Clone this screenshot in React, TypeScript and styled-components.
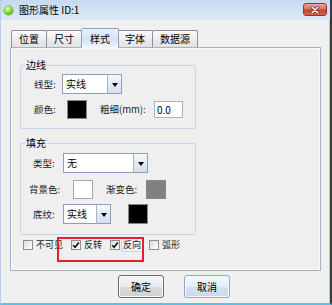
import React from "react";
import styled, { createGlobalStyle } from "styled-components";

const Global = createGlobalStyle`
  html, body { margin: 0; padding: 0; }
  body {
    width: 332px; height: 305px; overflow: hidden; background: #f0f0f0;
    font-family: "Noto Sans CJK SC", "Noto Sans", sans-serif;
    color: #000;
  }
`;

const Window = styled.div`
  position: relative;
  width: 332px;
  height: 305px;
  box-sizing: border-box;
  background: #f0f0f0;
  border-left: 1px solid #b4cde8;
  border-right: 2px solid #3a3a3a;
  border-bottom: 2px solid #57c3ea;
  box-shadow: inset -1px 0 0 #a9c6e6;
  display: flex;
  flex-direction: column;
`;

const TitleBar = styled.div`
  height: 20px;
  flex: none;
  display: flex;
  align-items: flex-start;
  background: linear-gradient(#c6d9ef, #dce8f5);
  border-bottom: 1px solid #d6e2f0;
  box-sizing: border-box;
`;

const AppIcon = styled.div`
  width: 9px;
  height: 9px;
  margin: 6px 0 0 3px;
  border-radius: 50%;
  background: radial-gradient(circle at 40% 30%, #e8ffc0 0%, #8ee04a 40%, #2f9a00 100%);
  box-shadow: 0 0 0 0.5px #5a8f2a;
`;

const Title = styled.div`
  margin: 3px 0 0 6px;
  font-size: 10px;
  line-height: 14px;
`;

const Spacer = styled.div`
  flex: 1;
`;

const CloseBtn = styled.div`
  width: 24px;
  height: 13px;
  margin: 3px 3px 0 0;
  box-sizing: border-box;
  border: 1px solid #8b3a2a;
  border-radius: 3px;
  background: linear-gradient(#eaa898 0%, #d9735e 45%, #c4432c 55%, #d6664c 100%);
  display: flex;
  align-items: center;
  justify-content: center;
`;

const Body = styled.div`
  flex: 1;
  display: flex;
  flex-direction: column;
  padding: 8px 0 0 9px;
`;

const TabRow = styled.div`
  display: flex;
  align-items: flex-end;
  height: 19px;
  padding-left: 1px;
`;

const Tab = styled.div<{ $active?: boolean }>`
  position: relative;
  z-index: ${(p) => (p.$active ? 2 : 1)};
  height: ${(p) => (p.$active ? "20px" : "17px")};
  margin: 0 ${(p) => (p.$active ? "-2px" : "-1px")} ${(p) => (p.$active ? "-1px" : "0")} 0;
  padding: 0 ${(p) => (p.$active ? "8px" : "7px")};
  box-sizing: border-box;
  border: 1px solid ${(p) => (p.$active ? "#8fa6c2" : "#8c8f96")};
  border-bottom: none;
  border-radius: 2px 2px 0 0;
  background: ${(p) =>
    p.$active
      ? "linear-gradient(#e6f0fb, #d3e3f5 55%, #f2f6fb)"
      : "linear-gradient(#fbfbfb, #ececec 50%, #e2e2e2)"};
  font-size: 10px;
  line-height: 16px;
  white-space: nowrap;
  display: flex;
  align-items: center;
`;

const Panel = styled.div`
  width: 311px;
  height: 224px;
  box-sizing: border-box;
  border: 1px solid #9db3ce;
  box-shadow: inset 0 0 0 1px #f8fbfe;
  background: #efefef;
  padding: 17px 0 0 9px;
  display: flex;
  flex-direction: column;
`;

const Group = styled.div<{ $h: number; $mb?: number }>`
  position: relative;
  width: 176px;
  height: ${(p) => p.$h}px;
  flex: none;
  box-sizing: border-box;
  border: 1px solid #c6d4e5;
  border-radius: 2px;
  margin-bottom: ${(p) => p.$mb ?? 0}px;
  display: flex;
  flex-direction: column;
`;

const Legend = styled.span`
  position: absolute;
  top: -8px;
  left: 4px;
  padding: 0 1px;
  background: #efefef;
  font-size: 10px;
  line-height: 14px;
`;

const Row = styled.div<{ $pl: number; $mt: number }>`
  display: flex;
  align-items: center;
  padding-left: ${(p) => p.$pl}px;
  margin-top: ${(p) => p.$mt}px;
  height: 20px;
`;

const Label = styled.span<{ $w: number; $ml?: number }>`
  width: ${(p) => p.$w}px;
  margin-left: ${(p) => p.$ml ?? 0}px;
  flex: none;
  font-size: 9.5px;
  line-height: 14px;
  color: #222;
  white-space: nowrap;
`;

const Combo = styled.div<{ $w: number }>`
  width: ${(p) => p.$w}px;
  height: 20px;
  box-sizing: border-box;
  border: 1px solid #8aa0bd;
  background: #fff;
  display: flex;
  flex: none;
`;

const ComboText = styled.span`
  flex: 1;
  padding-left: 3px;
  font-size: 10px;
  line-height: 18px;
`;

const ComboArrow = styled.span`
  width: 14px;
  box-sizing: border-box;
  border-left: 1px solid #a8b8cc;
  background: linear-gradient(#f7f9fc, #e4eaf1 50%, #d6dee8);
  display: flex;
  align-items: center;
  justify-content: center;
  &::after {
    content: "";
    border-left: 3.5px solid transparent;
    border-right: 3.5px solid transparent;
    border-top: 4px solid #000;
    margin-top: 1px;
  }
`;

const Swatch = styled.div<{ $color: string; $h?: number }>`
  width: 20px;
  height: ${(p) => p.$h ?? 19}px;
  flex: none;
  box-sizing: border-box;
  background: ${(p) => p.$color};
  border: 1px solid ${(p) => (p.$color === "#ffffff" ? "#a6a6a6" : "#7f8a96")};
`;

const TextInput = styled.div`
  width: 29px;
  height: 17px;
  flex: none;
  box-sizing: border-box;
  border: 1px solid #a9b4c3;
  background: #fff;
  font-size: 10px;
  line-height: 15px;
  padding-left: 2px;
`;

const CheckRow = styled.div`
  display: flex;
  align-items: center;
  height: 12px;
  margin-top: 4px;
  padding-left: 3px;
`;

const CheckItem = styled.div`
  display: flex;
  align-items: center;
  margin-right: 7px;
`;

const Box = styled.span`
  width: 10px;
  height: 10px;
  flex: none;
  box-sizing: border-box;
  border: 1px solid #8e8f8f;
  background: linear-gradient(135deg, #dcdcdc, #ffffff);
  display: flex;
  align-items: center;
  justify-content: center;
`;

const CheckLabel = styled.span<{ $focus?: boolean }>`
  margin-left: 2px;
  padding: 0 1px;
  font-size: 9px;
  line-height: 12px;
  color: #222;
  white-space: nowrap;
  outline: ${(p) => (p.$focus ? "1px solid #c8d8ea" : "none")};
`;

const ButtonRow = styled.div`
  display: flex;
  gap: 20px;
  margin: 4px 0 0 108px;
`;

const Button = styled.div<{ $default?: boolean }>`
  width: 46px;
  height: 23px;
  box-sizing: border-box;
  border: 1px solid ${(p) => (p.$default ? "#6b6b6b" : "#8fa9c6")};
  border-radius: 3px;
  background: ${(p) =>
    p.$default
      ? "linear-gradient(#f4f4f4, #ebebeb 50%, #dcdcdc 51%, #d0d0d0)"
      : "linear-gradient(#f5f9fc, #e3edf7 50%, #d2e2f1 51%, #c6daee)"};
  box-shadow: inset 0 0 0 1px ${(p) => (p.$default ? "#fbfbfb" : "#f4f8fc")};
  font-size: 10px;
  display: flex;
  align-items: center;
  justify-content: center;
`;

const Annotation = styled.div`
  position: absolute;
  left: 56px;
  top: 237px;
  width: 87px;
  height: 25px;
  box-sizing: border-box;
  border: 2px solid #ee1c25;
  pointer-events: none;
`;

const Check = () => (
  <svg width="8" height="8" viewBox="0 0 8 8">
    <path d="M1.2 4.2 L3.1 6.3 L6.9 1.4" fill="none" stroke="#111" strokeWidth="1.6" />
  </svg>
);

const ComboBox = ({ w, text }: { w: number; text: string }) => (
  <Combo $w={w}>
    <ComboText>{text}</ComboText>
    <ComboArrow />
  </Combo>
);

export default function App() {
  return (
    <>
      <Global />
      <Window>
        <TitleBar>
          <AppIcon />
          <Title>图形属性 ID:1</Title>
          <Spacer />
          <CloseBtn>
            <svg width="10" height="8" viewBox="0 0 10 8">
              <path d="M2 1 L8 7 M8 1 L2 7" stroke="#5a1a10" strokeWidth="2.6" strokeLinecap="round" />
              <path d="M2 1 L8 7 M8 1 L2 7" stroke="#fff" strokeWidth="1.5" strokeLinecap="round" />
            </svg>
          </CloseBtn>
        </TitleBar>
        <Body>
          <TabRow>
            <Tab>位置</Tab>
            <Tab>尺寸</Tab>
            <Tab $active>样式</Tab>
            <Tab>字体</Tab>
            <Tab>数据源</Tab>
          </TabRow>
          <Panel>
            <Group $h={64} $mb={14}>
              <Legend>边线</Legend>
              <Row $pl={13} $mt={8}>
                <Label $w={28}>线型:</Label>
                <ComboBox w={60} text="实线" />
              </Row>
              <Row $pl={13} $mt={5}>
                <Label $w={33}>颜色:</Label>
                <Swatch $color="#000000" />
                <Label $w={54} $ml={13}>粗细(mm):</Label>
                <TextInput>0.0</TextInput>
              </Row>
            </Group>
            <Group $h={92}>
              <Legend>填充</Legend>
              <Row $pl={12} $mt={9}>
                <Label $w={30}>类型:</Label>
                <ComboBox w={85} text="无" />
              </Row>
              <Row $pl={8} $mt={6}>
                <Label $w={44}>背景色:</Label>
                <Swatch $color="#ffffff" />
                <Label $w={40} $ml={13}>渐变色:</Label>
                <Swatch $color="#808080" />
              </Row>
              <Row $pl={12} $mt={5}>
                <Label $w={30}>底纹:</Label>
                <ComboBox w={48} text="实线" />
                <Label $w={17} />
                <Swatch $color="#000000" $h={20} />
              </Row>
            </Group>
            <CheckRow>
              <CheckItem>
                <Box />
                <CheckLabel>不可见</CheckLabel>
              </CheckItem>
              <CheckItem>
                <Box>
                  <Check />
                </Box>
                <CheckLabel>反转</CheckLabel>
              </CheckItem>
              <CheckItem>
                <Box>
                  <Check />
                </Box>
                <CheckLabel $focus>反向</CheckLabel>
              </CheckItem>
              <CheckItem>
                <Box />
                <CheckLabel>弧形</CheckLabel>
              </CheckItem>
            </CheckRow>
          </Panel>
          <ButtonRow>
            <Button $default>确定</Button>
            <Button>取消</Button>
          </ButtonRow>
        </Body>
        <Annotation />
      </Window>
    </>
  );
}
